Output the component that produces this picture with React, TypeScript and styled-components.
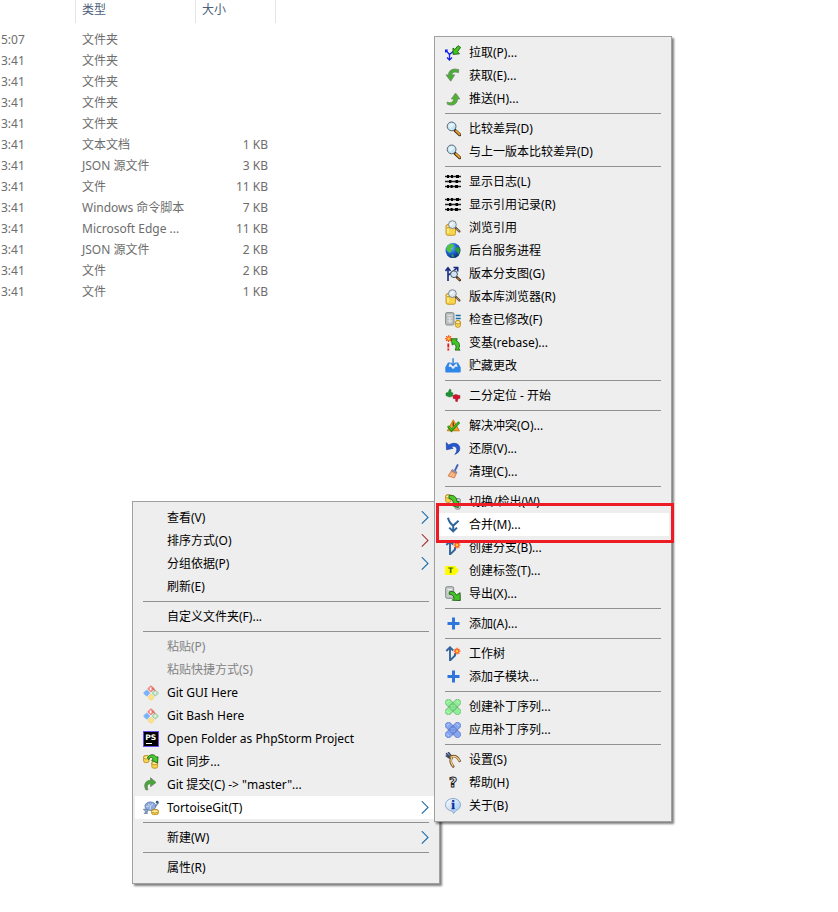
import React from "react";
import styled, { createGlobalStyle, css } from "styled-components";

const GlobalStyle = createGlobalStyle`
  * { box-sizing: border-box; }
  body {
    margin: 0;
    background: #fff;
    font-family: "Noto Sans", "Noto Sans CJK SC", sans-serif;
    font-size: 12px;
    line-height: 21px;
    overflow: hidden;
  }
  button { font: inherit; }
`;

const Desktop = styled.main`
  position: relative;
  min-height: 100vh;
`;

/* ---------- file list ---------- */

const FileTable = styled.table`
  border-collapse: separate;
  border-spacing: 0;
  table-layout: fixed;
  width: 276px;
  color: #6d6d6d;
`;

const HeadCell = styled.th<{ $width: number }>`
  width: ${(p) => p.$width}px;
  height: 23px;
  padding: 0 0 4px 6px;
  border-right: 1px solid #e5e5e5;
  color: #4c607a;
  font-weight: 400;
  line-height: 19px;
  text-align: left;
`;

const Gap = styled.tr`
  height: 6px;
`;

const Cell = styled.td<{ $kind: "time" | "type" | "size" }>`
  height: 21px;
  padding: 0 8px 0 6px;
  white-space: nowrap;
  ${(p) => p.$kind === "time" && css`padding: 0 0 0 1px;`}
  ${(p) => p.$kind === "type" && css`padding-right: 0;`}
  ${(p) => p.$kind === "size" && css`text-align: right;`}
`;

const files: [string, string, string][] = [
  ["5:07", "文件夹", ""],
  ["3:41", "文件夹", ""],
  ["3:41", "文件夹", ""],
  ["3:41", "文件夹", ""],
  ["3:41", "文件夹", ""],
  ["3:41", "文本文档", "1 KB"],
  ["3:41", "JSON 源文件", "3 KB"],
  ["3:41", "文件", "11 KB"],
  ["3:41", "Windows 命令脚本", "7 KB"],
  ["3:41", "Microsoft Edge ...", "11 KB"],
  ["3:41", "JSON 源文件", "2 KB"],
  ["3:41", "文件", "2 KB"],
  ["3:41", "文件", "1 KB"],
];

/* ---------- menus ---------- */

const Menu = styled.nav<{ $left: number; $top: number; $width: number }>`
  position: absolute;
  left: ${(p) => p.$left}px;
  top: ${(p) => p.$top}px;
  width: ${(p) => p.$width}px;
  display: flex;
  flex-direction: column;
  padding: 4px 2px;
  background: #eee;
  border: 1px solid #a0a0a0;
  box-shadow: 2px 2px 2px rgba(0, 0, 0, 0.5);
`;

const MenuItem = styled.button<{ $active?: boolean }>`
  display: flex;
  align-items: center;
  gap: 8px;
  height: 23px;
  padding: 0 8px;
  border: 0;
  background: ${(p) => (p.$active ? "#fff" : "transparent")};
  color: #000;
  text-align: left;
  white-space: nowrap;
  &:disabled { color: #838383; }
`;

const Separator = styled.hr`
  width: auto;
  height: 1px;
  margin: 3px 8px;
  border: 0;
  background: #919191;
`;

const IconSlot = styled.span`
  flex: 0 0 16px;
  display: flex;
  height: 16px;
`;

const Label = styled.span`
  flex: 1;
`;

const Highlight = styled.div`
  position: absolute;
  left: 436px;
  top: 503px;
  width: 238px;
  height: 40px;
  border: 3px solid #ed1c24;
  pointer-events: none;
`;

/* ---------- icons ---------- */

const Svg = ({ children }: { children: React.ReactNode }) => (
  <svg width="16" height="16" viewBox="0 0 16 16" aria-hidden="true">{children}</svg>
);

const Chevron = ({ color }: { color: string }) => (
  <svg width="8" height="14" viewBox="0 0 8 14" fill="none" aria-hidden="true">
    <path d="M.8 .2 7 6.4 .8 12.6" stroke={color} strokeWidth="1.1" />
  </svg>
);

const Lens = () => (
  <g>
    <path d="M10 9.3 14.6 13.6" stroke="#3d2a12" strokeWidth="3.2" strokeLinecap="round" />
    <path d="M11 9.9 14.6 13.3" stroke="#eda52c" strokeWidth="1.8" strokeLinecap="round" />
    <circle cx="6.6" cy="5.4" r="4.4" fill="#c3e6f6" stroke="#5a6672" strokeWidth="1" />
    <path d="M4 5.3 6.6 2.7M5 7 8.6 3.4" stroke="#fff" strokeWidth="1.1" />
  </g>
);

const Drum = ({ x, y, w, h, gray }: { x: number; y: number; w: number; h: number; gray?: boolean }) => (
  <g fill={gray ? "#c3c8c8" : "#f8d34c"} stroke={gray ? "#7f8989" : "#b78612"} strokeWidth=".8">
    <rect x={x} y={y} width={w} height={h} rx="1.8" />
    <ellipse cx={x + w / 2} cy={y + 1.7} rx={w / 2} ry="1.6" fill={gray ? "#e4e7e7" : "#fff0a0"} />
  </g>
);

const Burst = ({ x, y }: { x: number; y: number }) => (
  <g transform={`translate(${x} ${y})`}>
    <path d="M0-3.4V3.4M-3.4 0H3.4M-2.4-2.4 2.4 2.4M-2.4 2.4 2.4-2.4" stroke="#ff4a12" strokeWidth="1.2" />
    <circle r="1.7" fill="#ffd23c" stroke="#ff5a1c" strokeWidth=".8" />
  </g>
);

const Patch = ({ fill, line }: { fill: string; line: string }) => (
  <Svg>
    <g fill={fill} stroke={line} strokeWidth=".7">
      <rect x="-1.4" y="4.9" width="18.8" height="6.2" rx="1.4" transform="rotate(45 8 8)" />
      <rect x="-1.4" y="4.9" width="18.8" height="6.2" rx="1.4" transform="rotate(-45 8 8)" />
      <rect x="4.9" y="4.9" width="6.2" height="6.2" transform="rotate(45 8 8)" />
    </g>
    <path d="M2.2 3.6 3.8 2M2.2 12.4l1.6 1.6M12 2.2l1.6 1.6" stroke="#fff" strokeOpacity=".6" />
    <path d="M7.5 5.6h1M5.4 8h1M9.6 8h1M7.5 10.4h1M7.5 8h1" stroke={line} strokeWidth="1" />
  </Svg>
);

const DrumLens = () => (
  <Svg>
    <Drum x={1} y={4.5} w={9.5} h={10.8} />
    <path d="M3 9v4" stroke="#fff1a5" strokeWidth="1.4" />
    <path d="M10.6 7.8 14.4 11.4" stroke="#4a4038" strokeWidth="2.2" strokeLinecap="round" />
    <path d="M11.6 8.8 14.2 11.2" stroke="#c4975a" strokeWidth="1.1" strokeLinecap="round" />
    <circle cx="7.4" cy="4.6" r="3.9" fill="#dceaf0" stroke="#7d8992" />
    <path d="M5.4 5.2 8.2 2.6" stroke="#fff" strokeWidth="1.2" />
  </Svg>
);

const Branch = () => (
  <Svg>
    <path d="M5 15V2M1.3 5 5 1.3 8.2 4.5M5.4 14.2 10 9.5V7" stroke="#32649c" strokeWidth="1.9" fill="none" />
    <Burst x={12} y={5.2} />
  </Svg>
);

const Plus = () => (
  <Svg><path d="M8.5 1.5v12M2.5 7.5h12" stroke="#2f76dc" strokeWidth="3" /></Svg>
);

const Log = () => (
  <Svg>
    <path d="M0 2.5h16M0 7.5h16M0 12.5h16" stroke="#222" strokeWidth="1.4" />
    <path d="M2 2.5h2M6 2.5h2M11 2.5h3M4 7.5h2.4M10.5 7.5h2.6M2 12.5h2M5.6 12.5h2M10 12.5h3" stroke="#000" strokeWidth="3" />
  </Svg>
);

const GitDiamond = () => (
  <Svg>
    <g transform="rotate(45 8 8)" strokeWidth=".8">
      <rect x="2.7" y="2.7" width="4.7" height="4.7" rx="1" fill="#f08d85" stroke="#e87b73" />
      <rect x="8.7" y="2.7" width="4.7" height="4.7" rx="1" fill="#b5dcb9" stroke="#9ccaa1" />
      <rect x="2.7" y="8.7" width="4.7" height="4.7" rx="1" fill="#79b2fb" stroke="#86b8f8" />
      <rect x="8.7" y="8.7" width="4.7" height="4.7" rx="1" fill="#fbe28b" stroke="#f2d675" />
    </g>
    <path d="M7.6 2.6v2.6M12.2 7.2v1.8" stroke="#fff" strokeWidth="1.4" />
    <path d="M9.4 3 12 5.6" stroke="#e9605a" strokeWidth="1.3" />
  </Svg>
);

const icons: Record<string, React.ReactNode> = {
  pull: (
    <Svg>
      <path d="M1 5.5 4.5 9.5 8 6.5M4.5 9.5V15M2 12.5 4.5 15 7 12.5M.6 7.5V5.2h2.2" stroke="#1520f0" strokeWidth="1.3" fill="none" />
      <path d="M8 9.4V3l1.9 1.5L13 .7l2.6 1.7-3.1 4.4 2 2z" fill="#43c51a" stroke="#14620a" strokeWidth=".9" />
    </Svg>
  ),
  fetch: (
    <Svg>
      <path d="M13.8 1.7C8-.3 3.2 2.5 3.6 6.9H1l4.7 6.3 4-6.3H7C6.8 4.3 10 3.1 13.4 4.7z" fill="#48ad35" stroke="#74906d" strokeWidth=".9" />
    </Svg>
  ),
  push: (
    <Svg>
      <path d="M2 11C5 12.6 8.8 11.2 8.7 7.9H6.3l4.3-5.8 4.2 5.8h-2.4c.1 5.4-5 7.6-10 5.3z" fill="#4fb332" stroke="#6f9065" strokeWidth=".9" />
    </Svg>
  ),
  diff: <Svg><Lens /></Svg>,
  log: <Log />,
  drumLens: <DrumLens />,
  globe: (
    <Svg>
      <defs>
        <radialGradient id="sea" cx=".35" cy=".3" r=".8">
          <stop offset="0" stopColor="#78c8ff" /><stop offset=".5" stopColor="#1c62d4" /><stop offset="1" stopColor="#08215f" />
        </radialGradient>
      </defs>
      <circle cx="8" cy="7.6" r="7.5" fill="url(#sea)" />
      <path d="M5.5 .9C2.5 2 1 4.7 1.5 7.2c1.6 1.2 2.5 2.4 3.8 2.7.3-1.6 1.6-2 1.5-3.4L5.3 5.7l2.9-1.5 1-2.6z" fill="#54c43c" />
      <path d="M10 5.1c1.6-1.2 3.3-1 4.4-.4 1 2.5.6 5-.8 6.6-1.3-.2-.8-2-1.8-2.7-1.4-.3-2.4-1.7-1.8-3.5z" fill="#2d9b37" />
      <path d="M6.5 11.7c1.5-.4 2.3.5 2.2 2.5-1.4-.1-2.4-.8-2.2-2.5z" fill="#3cae3b" />
    </Svg>
  ),
  graph: (
    <Svg>
      <path d="M3 15V2.5M.5 5 3 1.8 5.5 5M3 9.5 12 2M8.5 1.5h4.2v4" stroke="#172b83" strokeWidth="1.6" fill="none" />
      <path d="M11.4 10.8 14.8 14.2" stroke="#3c2a1b" strokeWidth="2.4" strokeLinecap="round" />
      <path d="M12.2 11.8 14.6 14" stroke="#cf7b2a" strokeWidth="1.1" />
      <circle cx="9" cy="8.2" r="3.4" fill="#cfe5f3" stroke="#495563" />
    </Svg>
  ),
  check: (
    <Svg>
      <rect x=".6" y=".6" width="8.4" height="12.4" rx="1.4" fill="#b9bebe" stroke="#858d8d" />
      <path d="M2.4 3.3h5M2.4 6h5M2.4 9h5M4.9 6v5" stroke="#eff1f1" strokeWidth=".9" />
      <path d="M10.7 3.5h5M10.7 6.5h5" stroke="#1b6ba3" strokeWidth="1.3" />
      <Drum x={10.4} y={8.6} w={5} h={6.6} />
    </Svg>
  ),
  rebase: (
    <Svg>
      <Burst x={3.6} y={3.6} />
      <path d="M3.3 8.4v4M3.3 13.6v1.9" stroke="#e5181b" strokeWidth="1.8" />
      <path d="M6.3 3.8h6.1L11 5.5c3 .9 4.4 4.5 2.8 8.2l1.3 1.4h-4.9c1.5-3 1-5.3-1.1-6.3L7.3 10z" fill="#43c626" stroke="#17630d" strokeWidth=".9" />
    </Svg>
  ),
  stash: (
    <Svg>
      <path d="M.3 9.2 3 4.6h2.3L3.7 8.4h2.6l.8 1.9h2l.8-1.9h2.6L10.8 4.6H13l2.7 4.6v4.4q0 1-1 1H1.3q-1 0-1-1z" fill="#2f86e8" />
      <path d="M5.3 4.5 3.6 8.5h2.8l.8 1.9h1.8l.8-1.9h2.7L10.8 4.5z" fill="#eee" />
      <path d="M8.1.2v7M5.5 4.8l2.6 2.6 2.6-2.6" stroke="#2f7fe0" strokeWidth="1.4" fill="none" />
    </Svg>
  ),
  bisect: (
    <Svg>
      <path d="M1 5 3.2 4.4 4.6 1.2l1.4.5-.1 2.6 2 .6-.4 3.2-2.9 1L1 7.6z" fill="#1b9434" stroke="#18692a" strokeWidth=".5" />
      <path d="M8 7.6 10.6 6.5l2.2.5.2.5 1.8-.2.2 3-1.8.3-1 3.1-1.6-.5.2-2.2-2.6-.6z" fill="#d5142b" stroke="#8d1522" strokeWidth=".5" />
    </Svg>
  ),
  resolve: (
    <Svg>
      <path d="M8.3 1.8 14.3 12.8H2.3z" fill="#f4a42a" stroke="#d07c12" strokeLinejoin="round" />
      <path d="M8.3 4.2v4" stroke="#7a3b05" strokeWidth="1.4" />
      <path d="M3 8 6.5 12.4 14.2 4.2" stroke="#278f19" strokeWidth="2.6" fill="none" />
      <path d="M3.4 8.2 6.6 11.8 13.8 4.6" stroke="#5cd038" strokeWidth=".9" fill="none" />
    </Svg>
  ),
  revert: (
    <Svg>
      <path d="M1.2 1.6 1.5 8.8 8.2 7.3 6 5.8c3.4-1.4 6 .2 5.8 3 0 1.8-.7 3.2-2 4.6 3-1.2 5-3.1 5-6C14.8 2.6 9 .6 3.8 3.9z" fill="#2458d0" stroke="#123a9b" strokeWidth=".6" />
    </Svg>
  ),
  clean: (
    <Svg>
      <path d="M12.6 1 10.2 6" stroke="#455fb3" strokeWidth="1.8" strokeLinecap="round" />
      <path d="M7.2 5.4 12 8 11.4 9.8 6.2 7z" fill="#8a91b5" stroke="#636990" strokeWidth=".5" />
      <path d="M6.2 7 11.2 9.8 9.4 14 3 12z" fill="#f0a36b" stroke="#cf7540" strokeWidth=".7" />
      <path d="M5.4 11.8 7.5 8.8M7.6 12.8l1.6-3" stroke="#ffe2c8" strokeWidth=".7" />
    </Svg>
  ),
  switch: (
    <Svg>
      <Drum x={10} y={4.6} w={5.4} h={10.6} gray />
      <Drum x={0.6} y={0.8} w={5.4} h={7.6} />
      <path d="M4 1.6C8.6.4 12 3.2 12 7.6l1.7-.2-.5 6.2L6.6 11.3l1.8-1.2C8.4 6.8 7.2 4.8 4 4.6z" fill="#4cca2b" stroke="#195e0d" strokeWidth=".9" />
    </Svg>
  ),
  merge: (
    <Svg>
      <path d="M3 .8Q4 5.6 8.2 8.6L13.6 3.8M8.2 8v6M4.2 10.6 8.2 14.4 12 10.6" stroke="#32649c" strokeWidth="2" fill="none" />
    </Svg>
  ),
  branch: <Branch />,
  tag: (
    <Svg>
      <path d="M0 3h10.2L14 7.5 10.2 12H0z" fill="#fffb00" />
      <text x="5.6" y="10.2" textAnchor="middle" fontFamily="DejaVu Sans" fontSize="7.5" fontWeight="700" fill="#46680c">T</text>
    </Svg>
  ),
  export: (
    <Svg>
      <rect x=".7" y=".7" width="8" height="11.6" rx="1.4" fill="#c4c9c9" stroke="#838b8b" />
      <path d="M2.6 3.5h4M2.6 6h4" stroke="#f2f3f3" />
      <path d="M4.3 5.8C8.5 4.8 10.6 6.6 11.2 9.2l3.9-2.5.2 7.8-8-.3 1.9-2C8.6 9.6 7.2 8.4 4.3 8.2z" fill="#45c427" stroke="#165c0b" strokeWidth=".9" />
    </Svg>
  ),
  plus: <Plus />,
  patchGreen: <Patch fill="#8df095" line="#5d9f68" />,
  patchBlue: <Patch fill="#86a6f4" line="#5169ae" />,
  settings: (
    <Svg>
      <path d="M1.5 1.6 5.7 5.6M1.2 3.9 4.5 6M3.5.6 6.3 4" stroke="#39486f" strokeWidth="1.5" strokeLinecap="round" />
      <path d="M5.6 5C9.5 2.8 12.4 4.6 14.6 8.8M6.8 5.6C4.4 8.8 6.2 12 8.2 14.4" stroke="#765021" strokeWidth="2.6" fill="none" strokeLinecap="round" />
      <path d="M6 5.1C9.6 3.3 12.3 4.9 14.4 8.6M6.6 6.2C5 9.2 6.6 12 8 14" stroke="#edd18d" strokeWidth="1.3" fill="none" strokeLinecap="round" />
    </Svg>
  ),
  help: (
    <Svg>
      <text x="8" y="12.4" textAnchor="middle" fontFamily="DejaVu Sans" fontSize="14" fontWeight="700" fill="#fff" stroke="#222" strokeWidth="1">?</text>
    </Svg>
  ),
  about: (
    <Svg>
      <defs>
        <linearGradient id="bubble" x1="0" y1="0" x2="1" y2="1">
          <stop offset="0" stopColor="#fff" /><stop offset="1" stopColor="#9cc4ee" />
        </linearGradient>
      </defs>
      <path d="M8 .5a7.2 6.3 0 0 1 2.8 12.2L8.6 15.4 7.4 13.1A7.2 6.3 0 0 1 8 .5z" fill="url(#bubble)" stroke="#7fa2c8" strokeWidth=".9" />
      <text x="8" y="11" textAnchor="middle" fontFamily="Liberation Serif" fontSize="13" fontWeight="700" fill="#0b2d96" stroke="#0b2d96" strokeWidth=".4">i</text>
    </Svg>
  ),
  git: <GitDiamond />,
  phpstorm: (
    <Svg>
      <rect width="16" height="16" fill="#6a4df5" />
      <rect x="1" y="1" width="14" height="14" fill="#000" />
      <text x="2.2" y="8.6" fontFamily="DejaVu Sans" fontSize="7.6" fontWeight="700" fill="#fff">PS</text>
      <path d="M3 12.5h6" stroke="#fff" strokeWidth="1" />
    </Svg>
  ),
  sync: (
    <Svg>
      <Drum x={0.6} y={1.6} w={5.4} h={7} />
      <Drum x={8.8} y={7.4} w={5.8} h={6.8} />
      <path d="M4.4 4C6.3-.2 11.8-.2 13.2 3.2l1.8-.4-.4 6.2-6-2.6 1.7-1.3C9 2.8 6.6 2.8 6 5.6z" fill="#4cca2b" stroke="#1a650f" strokeWidth=".9" />
    </Svg>
  ),
  commit: (
    <Svg>
      <path d="M3 13C-.1 7.6 3 3 7.6 3.4V.8L13 5.4 7.6 9.6V6.8C4.6 6.5 3.3 9 5 12.6z" fill="#44a834" stroke="#6d8568" strokeWidth=".9" />
    </Svg>
  ),
  tortoise: (
    <Svg>
      <path d="M1 9.5 4.5 9 4 13.4H1.8L3 11.5zM9 11l2 3M12.4 6.5 15.3 3" fill="#a9bdd8" stroke="#7d93b5" strokeWidth="1.3" />
      <ellipse cx="7.4" cy="6.2" rx="5.4" ry="4.2" fill="#8cabda" stroke="#6683b3" />
      <path d="M5.2 4.1 7.5 5.9 10 4M7.5 5.9 7.2 9.6M3 6.6l3-.4" stroke="#dce8f6" strokeWidth=".8" fill="none" />
      <circle cx="14.2" cy="2.2" r="1.4" fill="#315a82" />
      <Drum x={8.6} y={9.6} w={6.8} h={5} />
    </Svg>
  ),
};

/* ---------- menu data ---------- */

type Entry = null | {
  label: string;
  icon?: string;
  arrow?: string;
  disabled?: boolean;
  active?: boolean;
};

const item = (label: string, icon?: string, extra: object = {}): Entry => ({ label, icon, ...extra });

const contextMenu: Entry[] = [
  item("查看(V)", undefined, { arrow: "#1769a8" }),
  item("排序方式(O)", undefined, { arrow: "#a33434" }),
  item("分组依据(P)", undefined, { arrow: "#1769a8" }),
  item("刷新(E)"),
  null,
  item("自定义文件夹(F)..."),
  null,
  item("粘贴(P)", undefined, { disabled: true }),
  item("粘贴快捷方式(S)", undefined, { disabled: true }),
  item("Git GUI Here", "git"),
  item("Git Bash Here", "git"),
  item("Open Folder as PhpStorm Project", "phpstorm"),
  item("Git 同步...", "sync"),
  item('Git 提交(C) -> "master"...', "commit"),
  item("TortoiseGit(T)", "tortoise", { active: true, arrow: "#1769a8" }),
  null,
  item("新建(W)", undefined, { arrow: "#1769a8" }),
  null,
  item("属性(R)"),
];

const tortoiseMenu: Entry[] = [
  item("拉取(P)...", "pull"),
  item("获取(E)...", "fetch"),
  item("推送(H)...", "push"),
  null,
  item("比较差异(D)", "diff"),
  item("与上一版本比较差异(D)", "diff"),
  null,
  item("显示日志(L)", "log"),
  item("显示引用记录(R)", "log"),
  item("浏览引用", "drumLens"),
  item("后台服务进程", "globe"),
  item("版本分支图(G)", "graph"),
  item("版本库浏览器(R)", "drumLens"),
  item("检查已修改(F)", "check"),
  item("变基(rebase)...", "rebase"),
  item("贮藏更改", "stash"),
  null,
  item("二分定位 - 开始", "bisect"),
  null,
  item("解决冲突(O)...", "resolve"),
  item("还原(V)...", "revert"),
  item("清理(C)...", "clean"),
  null,
  item("切换/检出(W)...", "switch"),
  item("合并(M)...", "merge", { active: true }),
  item("创建分支(B)...", "branch"),
  item("创建标签(T)...", "tag"),
  item("导出(X)...", "export"),
  null,
  item("添加(A)...", "plus"),
  null,
  item("工作树", "branch"),
  item("添加子模块...", "plus"),
  null,
  item("创建补丁序列...", "patchGreen"),
  item("应用补丁序列...", "patchBlue"),
  null,
  item("设置(S)", "settings"),
  item("帮助(H)", "help"),
  item("关于(B)", "about"),
];

const Entries = ({ list }: { list: Entry[] }) => (
  <>
    {list.map((e, i) =>
      e === null ? (
        <Separator key={i} />
      ) : (
        <MenuItem key={i} type="button" $active={e.active} disabled={e.disabled}>
          <IconSlot>{e.icon ? icons[e.icon] : null}</IconSlot>
          <Label>{e.label}</Label>
          {e.arrow && <Chevron color={e.arrow} />}
        </MenuItem>
      )
    )}
  </>
);

export default function App() {
  return (
    <>
      <GlobalStyle />
      <Desktop>
        <FileTable>
          <thead>
            <tr>
              <HeadCell $width={76} />
              <HeadCell $width={120}>类型</HeadCell>
              <HeadCell $width={80}>大小</HeadCell>
            </tr>
          </thead>
          <tbody>
            <Gap />
            {files.map(([time, type, size], i) => (
              <tr key={i}>
                <Cell $kind="time">{time}</Cell>
                <Cell $kind="type">{type}</Cell>
                <Cell $kind="size">{size}</Cell>
              </tr>
            ))}
          </tbody>
        </FileTable>
        <Menu $left={132} $top={501} $width={308}>
          <Entries list={contextMenu} />
        </Menu>
        <Menu $left={434} $top={36} $width={238}>
          <Entries list={tortoiseMenu} />
        </Menu>
        <Highlight />
      </Desktop>
    </>
  );
}
